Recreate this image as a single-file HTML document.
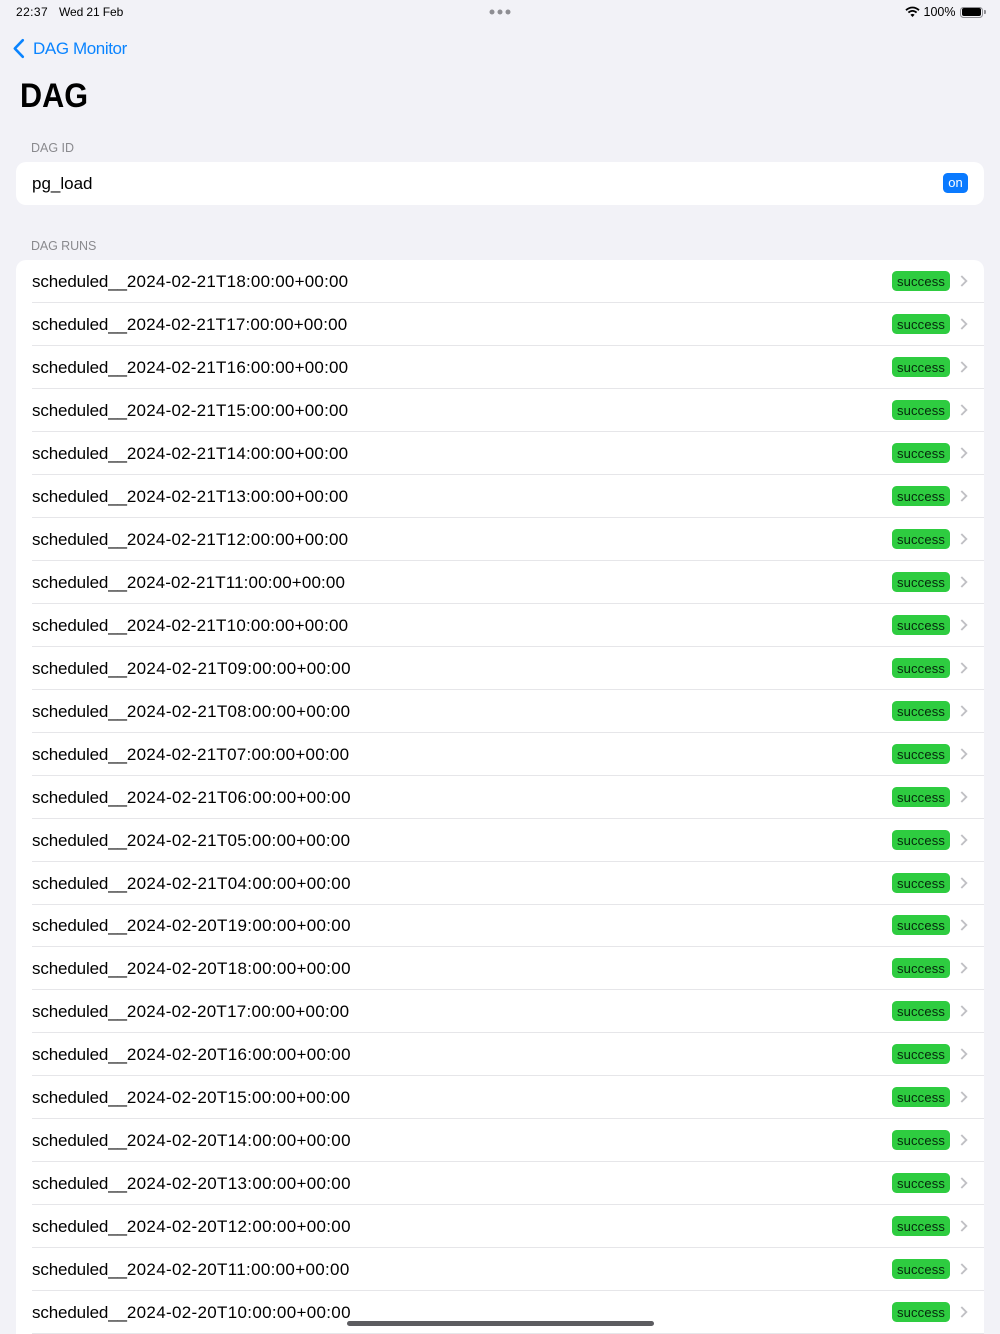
<!DOCTYPE html>
<html><head><meta charset="utf-8"><style>
html,body{margin:0;padding:0}
body{width:1000px;height:1334px;overflow:hidden;background:#f2f2f7;position:relative;font-family:"Liberation Sans",sans-serif;color:#000}
.a{position:absolute;white-space:nowrap}
.card{position:absolute;left:16px;width:968px;background:#fff}
.r{position:absolute;left:0;width:968px;height:43px}
.r .t{position:absolute;left:16px;top:11px;font-size:17px;line-height:21px;white-space:nowrap}
.t span{letter-spacing:-.14px}
.w1{letter-spacing:.22px}.w2{letter-spacing:.18px}.w3{letter-spacing:.14px}.w4{letter-spacing:.32px}.w5{letter-spacing:.3px}.w6{letter-spacing:.26px}
.r .sep{position:absolute;left:16px;right:0;bottom:0;height:1px;background:#e6e6e9}
.r .b{position:absolute;left:876px;top:11px;width:58px;height:20px;border-radius:4.5px;background:#2ecc40;font-size:13px;letter-spacing:.15px;line-height:21px;text-align:center;color:#06280c}
.r svg{position:absolute;left:944px;top:15px}
.h{position:absolute;left:31px;font-size:12.5px;line-height:16px;color:#8a8a8e}
</style></head><body>
<div class="a" style="left:16px;top:5px;font-size:12px;line-height:14px;letter-spacing:.4px">22:37</div>
<div class="a" style="left:59px;top:5px;font-size:12px;line-height:14px;letter-spacing:-.1px">Wed 21 Feb</div>
<svg class="a" style="left:488px;top:8px" width="24" height="8"><circle cx="4" cy="4" r="2.5" fill="#8e8e93"/><circle cx="12" cy="4" r="2.5" fill="#8e8e93"/><circle cx="20" cy="4" r="2.5" fill="#8e8e93"/></svg>
<svg class="a" style="left:905px;top:6px" width="15" height="12" viewBox="0 0 15 12"><path d="M1 4.2C5 .6 10 .6 14 4.2" fill="none" stroke="#000" stroke-width="1.8"/><path d="M3.4 6.6c2.6-2.3 5.6-2.3 8.2 0" fill="none" stroke="#000" stroke-width="1.8"/><path d="M5.4 8.7c1.4-1.1 2.8-1.1 4.2 0L7.5 11z" fill="#000"/></svg>
<div class="a" style="left:923.5px;top:5px;font-size:12.5px;line-height:14px">100%</div>
<div class="a" style="left:960px;top:6.5px;width:21px;height:9.5px;border:1px solid #8e8e93;border-radius:3.5px"></div>
<div class="a" style="left:961.7px;top:8.3px;width:19.3px;height:7.8px;background:#000;border-radius:2px"></div>
<div class="a" style="left:984px;top:10px;width:1.5px;height:4px;background:#8e8e93;border-radius:0 1px 1px 0"></div>
<svg class="a" style="left:12px;top:38px" width="14" height="21" viewBox="0 0 14 21"><path d="M10.8 2.2 2.8 10.5l8 8.3" fill="none" stroke="#0a84ff" stroke-width="2.6" stroke-linecap="round" stroke-linejoin="round"/></svg>
<div class="a" style="left:33px;top:38px;font-size:17px;line-height:21px;letter-spacing:-.4px;color:#0a84ff">DAG Monitor</div>
<div class="a" style="left:20px;top:76px;font-size:34px;line-height:40px;font-weight:bold;transform:scaleX(.9);transform-origin:0 0">DAG</div>
<div class="h" style="top:140px">DAG ID</div>
<div class="card" style="top:161.5px;height:43px;border-radius:10px">
<div class="r" style="top:.5px"><div class="t">pg_load</div><div style="position:absolute;left:927px;top:11px;width:25px;height:20px;border-radius:4.5px;background:#0a7aff;color:#fff;font-size:13px;line-height:20px;text-align:center">on</div></div>
</div>
<div class="h" style="top:238px;letter-spacing:-.1px">DAG RUNS</div>
<div class="card" style="top:259.5px;height:1074.5px;border-radius:10px 10px 0 0">
<div class="r" style="top:.5px"><div class="t w1"><span>scheduled__</span>2024-02-21T18:00:00+00:00</div><div class="b">success</div><svg width="8" height="12" viewBox="0 0 8 12"><path d="M1.3 1 6.3 6l-5 5" fill="none" stroke="#c0c0c4" stroke-width="1.9"/></svg><div class="sep"></div></div>
<div class="r" style="top:43.5px"><div class="t w2"><span>scheduled__</span>2024-02-21T17:00:00+00:00</div><div class="b">success</div><svg width="8" height="12" viewBox="0 0 8 12"><path d="M1.3 1 6.3 6l-5 5" fill="none" stroke="#c0c0c4" stroke-width="1.9"/></svg><div class="sep"></div></div>
<div class="r" style="top:86.5px"><div class="t w1"><span>scheduled__</span>2024-02-21T16:00:00+00:00</div><div class="b">success</div><svg width="8" height="12" viewBox="0 0 8 12"><path d="M1.3 1 6.3 6l-5 5" fill="none" stroke="#c0c0c4" stroke-width="1.9"/></svg><div class="sep"></div></div>
<div class="r" style="top:129.5px"><div class="t w1"><span>scheduled__</span>2024-02-21T15:00:00+00:00</div><div class="b">success</div><svg width="8" height="12" viewBox="0 0 8 12"><path d="M1.3 1 6.3 6l-5 5" fill="none" stroke="#c0c0c4" stroke-width="1.9"/></svg><div class="sep"></div></div>
<div class="r" style="top:172.5px"><div class="t w1"><span>scheduled__</span>2024-02-21T14:00:00+00:00</div><div class="b">success</div><svg width="8" height="12" viewBox="0 0 8 12"><path d="M1.3 1 6.3 6l-5 5" fill="none" stroke="#c0c0c4" stroke-width="1.9"/></svg><div class="sep"></div></div>
<div class="r" style="top:215.5px"><div class="t w1"><span>scheduled__</span>2024-02-21T13:00:00+00:00</div><div class="b">success</div><svg width="8" height="12" viewBox="0 0 8 12"><path d="M1.3 1 6.3 6l-5 5" fill="none" stroke="#c0c0c4" stroke-width="1.9"/></svg><div class="sep"></div></div>
<div class="r" style="top:258.5px"><div class="t w1"><span>scheduled__</span>2024-02-21T12:00:00+00:00</div><div class="b">success</div><svg width="8" height="12" viewBox="0 0 8 12"><path d="M1.3 1 6.3 6l-5 5" fill="none" stroke="#c0c0c4" stroke-width="1.9"/></svg><div class="sep"></div></div>
<div class="r" style="top:301.5px"><div class="t w3"><span>scheduled__</span>2024-02-21T11:00:00+00:00</div><div class="b">success</div><svg width="8" height="12" viewBox="0 0 8 12"><path d="M1.3 1 6.3 6l-5 5" fill="none" stroke="#c0c0c4" stroke-width="1.9"/></svg><div class="sep"></div></div>
<div class="r" style="top:344.5px"><div class="t w1"><span>scheduled__</span>2024-02-21T10:00:00+00:00</div><div class="b">success</div><svg width="8" height="12" viewBox="0 0 8 12"><path d="M1.3 1 6.3 6l-5 5" fill="none" stroke="#c0c0c4" stroke-width="1.9"/></svg><div class="sep"></div></div>
<div class="r" style="top:387.5px"><div class="t w4"><span>scheduled__</span>2024-02-21T09:00:00+00:00</div><div class="b">success</div><svg width="8" height="12" viewBox="0 0 8 12"><path d="M1.3 1 6.3 6l-5 5" fill="none" stroke="#c0c0c4" stroke-width="1.9"/></svg><div class="sep"></div></div>
<div class="r" style="top:430.5px"><div class="t w5"><span>scheduled__</span>2024-02-21T08:00:00+00:00</div><div class="b">success</div><svg width="8" height="12" viewBox="0 0 8 12"><path d="M1.3 1 6.3 6l-5 5" fill="none" stroke="#c0c0c4" stroke-width="1.9"/></svg><div class="sep"></div></div>
<div class="r" style="top:473.5px"><div class="t w6"><span>scheduled__</span>2024-02-21T07:00:00+00:00</div><div class="b">success</div><svg width="8" height="12" viewBox="0 0 8 12"><path d="M1.3 1 6.3 6l-5 5" fill="none" stroke="#c0c0c4" stroke-width="1.9"/></svg><div class="sep"></div></div>
<div class="r" style="top:516.5px"><div class="t w4"><span>scheduled__</span>2024-02-21T06:00:00+00:00</div><div class="b">success</div><svg width="8" height="12" viewBox="0 0 8 12"><path d="M1.3 1 6.3 6l-5 5" fill="none" stroke="#c0c0c4" stroke-width="1.9"/></svg><div class="sep"></div></div>
<div class="r" style="top:559.5px"><div class="t w5"><span>scheduled__</span>2024-02-21T05:00:00+00:00</div><div class="b">success</div><svg width="8" height="12" viewBox="0 0 8 12"><path d="M1.3 1 6.3 6l-5 5" fill="none" stroke="#c0c0c4" stroke-width="1.9"/></svg><div class="sep"></div></div>
<div class="r" style="top:602.5px"><div class="t w4"><span>scheduled__</span>2024-02-21T04:00:00+00:00</div><div class="b">success</div><svg width="8" height="12" viewBox="0 0 8 12"><path d="M1.3 1 6.3 6l-5 5" fill="none" stroke="#c0c0c4" stroke-width="1.9"/></svg><div class="sep"></div></div>
<div class="r" style="top:644.5px"><div class="t w4"><span>scheduled__</span>2024-02-20T19:00:00+00:00</div><div class="b">success</div><svg width="8" height="12" viewBox="0 0 8 12"><path d="M1.3 1 6.3 6l-5 5" fill="none" stroke="#c0c0c4" stroke-width="1.9"/></svg><div class="sep"></div></div>
<div class="r" style="top:687.5px"><div class="t w4"><span>scheduled__</span>2024-02-20T18:00:00+00:00</div><div class="b">success</div><svg width="8" height="12" viewBox="0 0 8 12"><path d="M1.3 1 6.3 6l-5 5" fill="none" stroke="#c0c0c4" stroke-width="1.9"/></svg><div class="sep"></div></div>
<div class="r" style="top:730.5px"><div class="t w6"><span>scheduled__</span>2024-02-20T17:00:00+00:00</div><div class="b">success</div><svg width="8" height="12" viewBox="0 0 8 12"><path d="M1.3 1 6.3 6l-5 5" fill="none" stroke="#c0c0c4" stroke-width="1.9"/></svg><div class="sep"></div></div>
<div class="r" style="top:773.5px"><div class="t w4"><span>scheduled__</span>2024-02-20T16:00:00+00:00</div><div class="b">success</div><svg width="8" height="12" viewBox="0 0 8 12"><path d="M1.3 1 6.3 6l-5 5" fill="none" stroke="#c0c0c4" stroke-width="1.9"/></svg><div class="sep"></div></div>
<div class="r" style="top:816.5px"><div class="t w5"><span>scheduled__</span>2024-02-20T15:00:00+00:00</div><div class="b">success</div><svg width="8" height="12" viewBox="0 0 8 12"><path d="M1.3 1 6.3 6l-5 5" fill="none" stroke="#c0c0c4" stroke-width="1.9"/></svg><div class="sep"></div></div>
<div class="r" style="top:859.5px"><div class="t w4"><span>scheduled__</span>2024-02-20T14:00:00+00:00</div><div class="b">success</div><svg width="8" height="12" viewBox="0 0 8 12"><path d="M1.3 1 6.3 6l-5 5" fill="none" stroke="#c0c0c4" stroke-width="1.9"/></svg><div class="sep"></div></div>
<div class="r" style="top:902.5px"><div class="t w4"><span>scheduled__</span>2024-02-20T13:00:00+00:00</div><div class="b">success</div><svg width="8" height="12" viewBox="0 0 8 12"><path d="M1.3 1 6.3 6l-5 5" fill="none" stroke="#c0c0c4" stroke-width="1.9"/></svg><div class="sep"></div></div>
<div class="r" style="top:945.5px"><div class="t w4"><span>scheduled__</span>2024-02-20T12:00:00+00:00</div><div class="b">success</div><svg width="8" height="12" viewBox="0 0 8 12"><path d="M1.3 1 6.3 6l-5 5" fill="none" stroke="#c0c0c4" stroke-width="1.9"/></svg><div class="sep"></div></div>
<div class="r" style="top:988.5px"><div class="t w4"><span>scheduled__</span>2024-02-20T11:00:00+00:00</div><div class="b">success</div><svg width="8" height="12" viewBox="0 0 8 12"><path d="M1.3 1 6.3 6l-5 5" fill="none" stroke="#c0c0c4" stroke-width="1.9"/></svg><div class="sep"></div></div>
<div class="r" style="top:1031.5px"><div class="t w4"><span>scheduled__</span>2024-02-20T10:00:00+00:00</div><div class="b">success</div><svg width="8" height="12" viewBox="0 0 8 12"><path d="M1.3 1 6.3 6l-5 5" fill="none" stroke="#c0c0c4" stroke-width="1.9"/></svg><div class="sep"></div></div>
</div>
<div class="a" style="left:346.5px;top:1321px;width:307px;height:5px;border-radius:3px;background:#5c5c60"></div>
</body></html>
